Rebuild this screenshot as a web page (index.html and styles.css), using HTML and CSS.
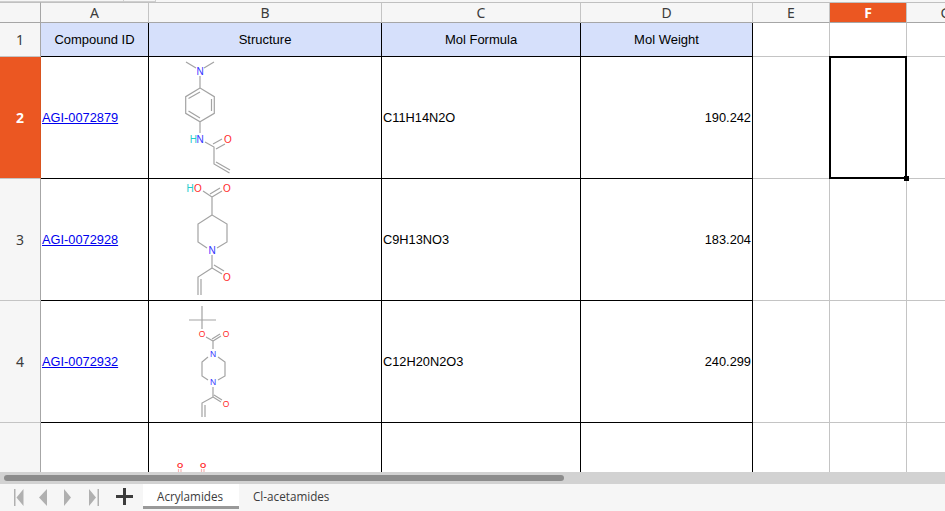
FILE: index.html
```html
<!DOCTYPE html>
<html lang="en">
<head>
    <meta charset="UTF-8">
    <title>Acrylamides</title>
    <link rel="stylesheet" href="styles.css">
</head>
<body>
    <!-- Bottom edge of the formula bar -->
    <div class="formula-edge">
        <div class="edge-name"></div>
        <div class="edge-tools"></div>
    </div>

    <div class="sheet">
        <table class="grid">
            <colgroup>
                <col class="col-head"><col class="col-a"><col class="col-b"><col class="col-c">
                <col class="col-d"><col class="col-e"><col class="col-f"><col class="col-g">
            </colgroup>
            <thead>
                <tr class="letters">
                    <th class="corner"></th>
                    <th>A</th>
                    <th>B</th>
                    <th>C</th>
                    <th>D</th>
                    <th>E</th>
                    <th class="selected">F</th>
                    <th>G</th>
                </tr>
            </thead>
            <tbody>
                <!-- Title row -->
                <tr class="row-title">
                    <th class="row-num">1</th>
                    <td class="title">Compound ID</td>
                    <td class="title">Structure</td>
                    <td class="title">Mol Formula</td>
                    <td class="title">Mol Weight</td>
                    <td class="blank"></td>
                    <td class="blank"></td>
                    <td class="blank"></td>
                </tr>

                <!-- Compounds -->
                <tr class="row-data">
                    <th class="row-num selected">2</th>
                    <td class="data"><a href="#">AGI-0072879</a></td>
                    <td class="data mol">
                        <svg viewBox="149 57 232 121" width="232" height="121">
                            <path class="bond" d="M186 62L196 68M214 62L204 68M200 76V88L214.3 96.7V113.3L200 121.7L185.7 113.3V96.7L200 88M211.5 99V111M188.5 111L200 118M188.5 98.5L200 92M200 121.7V133M205 142L214 147V164L229.5 173M213 144L222 139M216 149L225 144M216 162L230 170"/>
                            <text class="atom n" x="200" y="75">N</text>
                            <text class="atom h" x="193.3" y="143">H</text>
                            <text class="atom n" x="200" y="143">N</text>
                            <text class="atom o" x="228" y="143">O</text>
                        </svg>
                    </td>
                    <td class="data">C11H14N2O</td>
                    <td class="data num">190.242</td>
                    <td class="blank"></td>
                    <td class="blank active-cell"><div class="cursor"><span class="handle"></span></div></td>
                    <td class="blank"></td>
                </tr>
                <tr class="row-data">
                    <th class="row-num">3</th>
                    <td class="data"><a href="#">AGI-0072928</a></td>
                    <td class="data mol">
                        <svg viewBox="149 179 232 121" width="232" height="121">
                            <path class="bond" d="M203 191L212 197V215L227 224V242L217 248M207 248L198 242V224L212 215M212 255V268L222 274M214 265L224 271M212 268L198 277V295M201 279V295M212 197L222 191M210 194L220 188"/>
                            <text class="atom h" x="190" y="192">H</text>
                            <text class="atom o" x="198" y="192">O</text>
                            <text class="atom o" x="227" y="192">O</text>
                            <text class="atom n" x="212" y="254">N</text>
                            <text class="atom o" x="227" y="281">O</text>
                        </svg>
                    </td>
                    <td class="data">C9H13NO3</td>
                    <td class="data num">183.204</td>
                    <td class="blank"></td>
                    <td class="blank"></td>
                    <td class="blank"></td>
                </tr>
                <tr class="row-data">
                    <th class="row-num">4</th>
                    <td class="data"><a href="#">AGI-0072932</a></td>
                    <td class="data mol">
                        <svg viewBox="149 301 232 121" width="232" height="121">
                            <path class="bond" d="M202 306V329M189 320H216M206 337L213 341L221 336M212 339L220 334M213 341V349M218 357L225 362V376L218 380M208 380L202 376V362L208 357M213 387V397L221 402M214 395L222 400M213 397L202 403V417M205 405V417"/>
                            <text class="atom small o" x="202" y="337">O</text>
                            <text class="atom small o" x="226" y="337">O</text>
                            <text class="atom small n" x="213" y="357">N</text>
                            <text class="atom small n" x="213" y="385">N</text>
                            <text class="atom small o" x="226" y="407">O</text>
                        </svg>
                    </td>
                    <td class="data">C12H20N2O3</td>
                    <td class="data num">240.299</td>
                    <td class="blank"></td>
                    <td class="blank"></td>
                    <td class="blank"></td>
                </tr>
                <tr class="row-data">
                    <th class="row-num"></th>
                    <td class="data"></td>
                    <td class="data mol">
                        <svg viewBox="149 423 232 121" width="232" height="121">
                            <path class="bond-o" d="M178.5 469V480M181 469V480M201.5 469V480M204 469V480"/>
                            <text class="atom tiny o" x="180" y="468">O</text>
                            <text class="atom tiny o" x="203" y="468">O</text>
                        </svg>
                    </td>
                    <td class="data"></td>
                    <td class="data"></td>
                    <td class="blank"></td>
                    <td class="blank"></td>
                    <td class="blank"></td>
                </tr>
            </tbody>
        </table>
    </div>

    <div class="scrollbar"><div class="thumb"></div></div>

    <!-- Sheet tabs -->
    <div class="tabbar">
        <div class="nav">
            <svg viewBox="0 0 12 18" width="12" height="18"><path class="nav-icon" d="M0 0H1.5V17H0ZM9.5 0V17L2.5 8.5Z"/></svg>
            <svg viewBox="0 0 12 18" width="12" height="18"><path class="nav-icon" d="M8 0V17L0 8.5Z"/></svg>
            <svg viewBox="0 0 12 18" width="12" height="18"><path class="nav-icon" d="M0 0V17L7 8.5Z"/></svg>
            <svg viewBox="0 0 12 18" width="12" height="18"><path class="nav-icon" d="M8.5 0H10V17H8.5ZM0 0V17L7 8.5Z"/></svg>
        </div>
        <div class="add-sheet"></div>
        <div class="tab active">Acrylamides</div>
        <div class="tab">Cl-acetamides</div>
    </div>
</body>
</html>
```

FILE: styles.css
```css
html, body {
    margin: 0;
    height: 100%;
    overflow: hidden;
}

body {
    background-color: #f6f6f6;
    font-family: "Liberation Sans", Arial, sans-serif;
    font-size: 13px;
    color: #000;
}

/* Formula bar edge */
.formula-edge {
    display: flex;
    height: 2px;
}

.edge-name, .edge-tools {
    box-sizing: border-box;
    height: 2px;
    border-right: 1px solid #cfcfcf;
    border-bottom: 1px solid #cfcfcf;
}

.edge-name { width: 124px; }
.edge-tools { width: 32px; }

/* Spreadsheet area */
.sheet {
    height: 470px;
    overflow: hidden;
    background-color: #fff;
}

.grid {
    table-layout: fixed;
    width: 985px;
    border-collapse: separate;
    border-spacing: 0;
}

.col-head { width: 41px; }
.col-a { width: 108px; }
.col-b { width: 233px; }
.col-c { width: 199px; }
.col-d { width: 172px; }
.col-e { width: 77px; }
.col-f { width: 77px; }
.col-g { width: 78px; }

.grid th, .grid td {
    box-sizing: border-box;
    padding: 0;
    overflow: hidden;
    white-space: nowrap;
}

/* Column letters */
.letters th {
    height: 21px;
    background-color: #f6f6f6;
    border-top: 1px solid #c0c0c0;
    border-right: 1px solid #c4c4c4;
    border-bottom: 1px solid #a6a6a6;
    font-family: "Noto Sans", sans-serif;
    font-weight: 400;
    font-size: 14px;
    color: #3c3c3c;
    text-align: center;
}

.letters .corner {
    border-right-color: #a6a6a6;
}

.letters th.selected {
    background-color: #eb5722;
    color: #fff;
    font-weight: 700;
}

/* Row numbers */
.row-num {
    background-color: #f6f6f6;
    border-right: 1px solid #a6a6a6;
    border-bottom: 1px solid #c4c4c4;
    font-family: "Noto Sans", sans-serif;
    font-weight: 400;
    font-size: 14px;
    color: #3c3c3c;
    text-align: center;
}

.grid .row-num.selected {
    background-color: #eb5722;
    border-right-color: #d9541f;
    color: #fff;
    font-weight: 700;
}

.row-title { height: 34px; }
.row-data { height: 122px; }

/* Cells */
.title {
    background-color: #d6e0fb;
    border-right: 1px solid #000;
    border-bottom: 1px solid #000;
    text-align: center;
}

.data {
    padding: 0 1px !important;
    border-right: 1px solid #000;
    border-bottom: 1px solid #000;
    font-size: 12.8px;
}

.data a {
    color: #0000ee;
}

.data.num {
    text-align: right;
}

.grid .data.mol {
    padding: 0 !important;
    vertical-align: top;
}

.mol svg {
    display: block;
}

.blank {
    border-right: 1px solid #c4c4c4;
    border-bottom: 1px solid #c4c4c4;
}

/* Selected cell */
.grid .active-cell {
    position: relative;
    overflow: visible;
}

.cursor {
    position: absolute;
    top: -1px;
    left: -1px;
    right: -1px;
    bottom: -1px;
    border: 2px solid #000;
}

.handle {
    position: absolute;
    right: -4px;
    bottom: -4px;
    width: 5px;
    height: 5px;
    background-color: #000;
}

/* Molecule drawings */
.bond, .bond-o {
    fill: none;
    stroke: #a3a3a3;
    stroke-width: 1.2;
}

.bond-o {
    stroke: #f4b4b4;
}

.atom {
    font-size: 10px;
    text-anchor: middle;
}

.atom.small {
    font-size: 8.5px;
}

.atom.tiny {
    font-size: 8px;
    font-weight: 700;
}

.atom.n { fill: #3333ff; }
.atom.o { fill: #ff2a2a; }
.atom.h { fill: #22cccc; }

/* Horizontal scrollbar */
.scrollbar {
    box-sizing: border-box;
    height: 12px;
    padding: 3px 0 3px 4px;
    background-color: #d2d2d2;
}

.thumb {
    width: 560px;
    height: 6px;
    border-radius: 3px;
    background-color: #8c8c8c;
}

/* Tab bar */
.tabbar {
    display: flex;
    height: 27px;
    background-color: #f6f6f6;
    font-family: "Open Sans", sans-serif;
    font-size: 11.7px;
    color: #3c3c3c;
}

.nav {
    display: flex;
    gap: 13px;
    align-items: center;
    width: 97px;
    padding-left: 14px;
}

.nav-icon {
    fill: #b0b0b0;
}

.add-sheet {
    position: relative;
    width: 17px;
    margin: 4px 10px 0 5px;
    height: 17px;
    background:
        linear-gradient(#3c3c3c, #3c3c3c) center / 17px 3px no-repeat,
        linear-gradient(#3c3c3c, #3c3c3c) center / 3px 17px no-repeat;
}

.tab {
    box-sizing: border-box;
    height: 25px;
    padding: 3px 14px 0;
    line-height: 18px;
}

.tab.active {
    width: 96px;
    background-color: #fff;
    border-bottom: 3px solid #999;
}
```
